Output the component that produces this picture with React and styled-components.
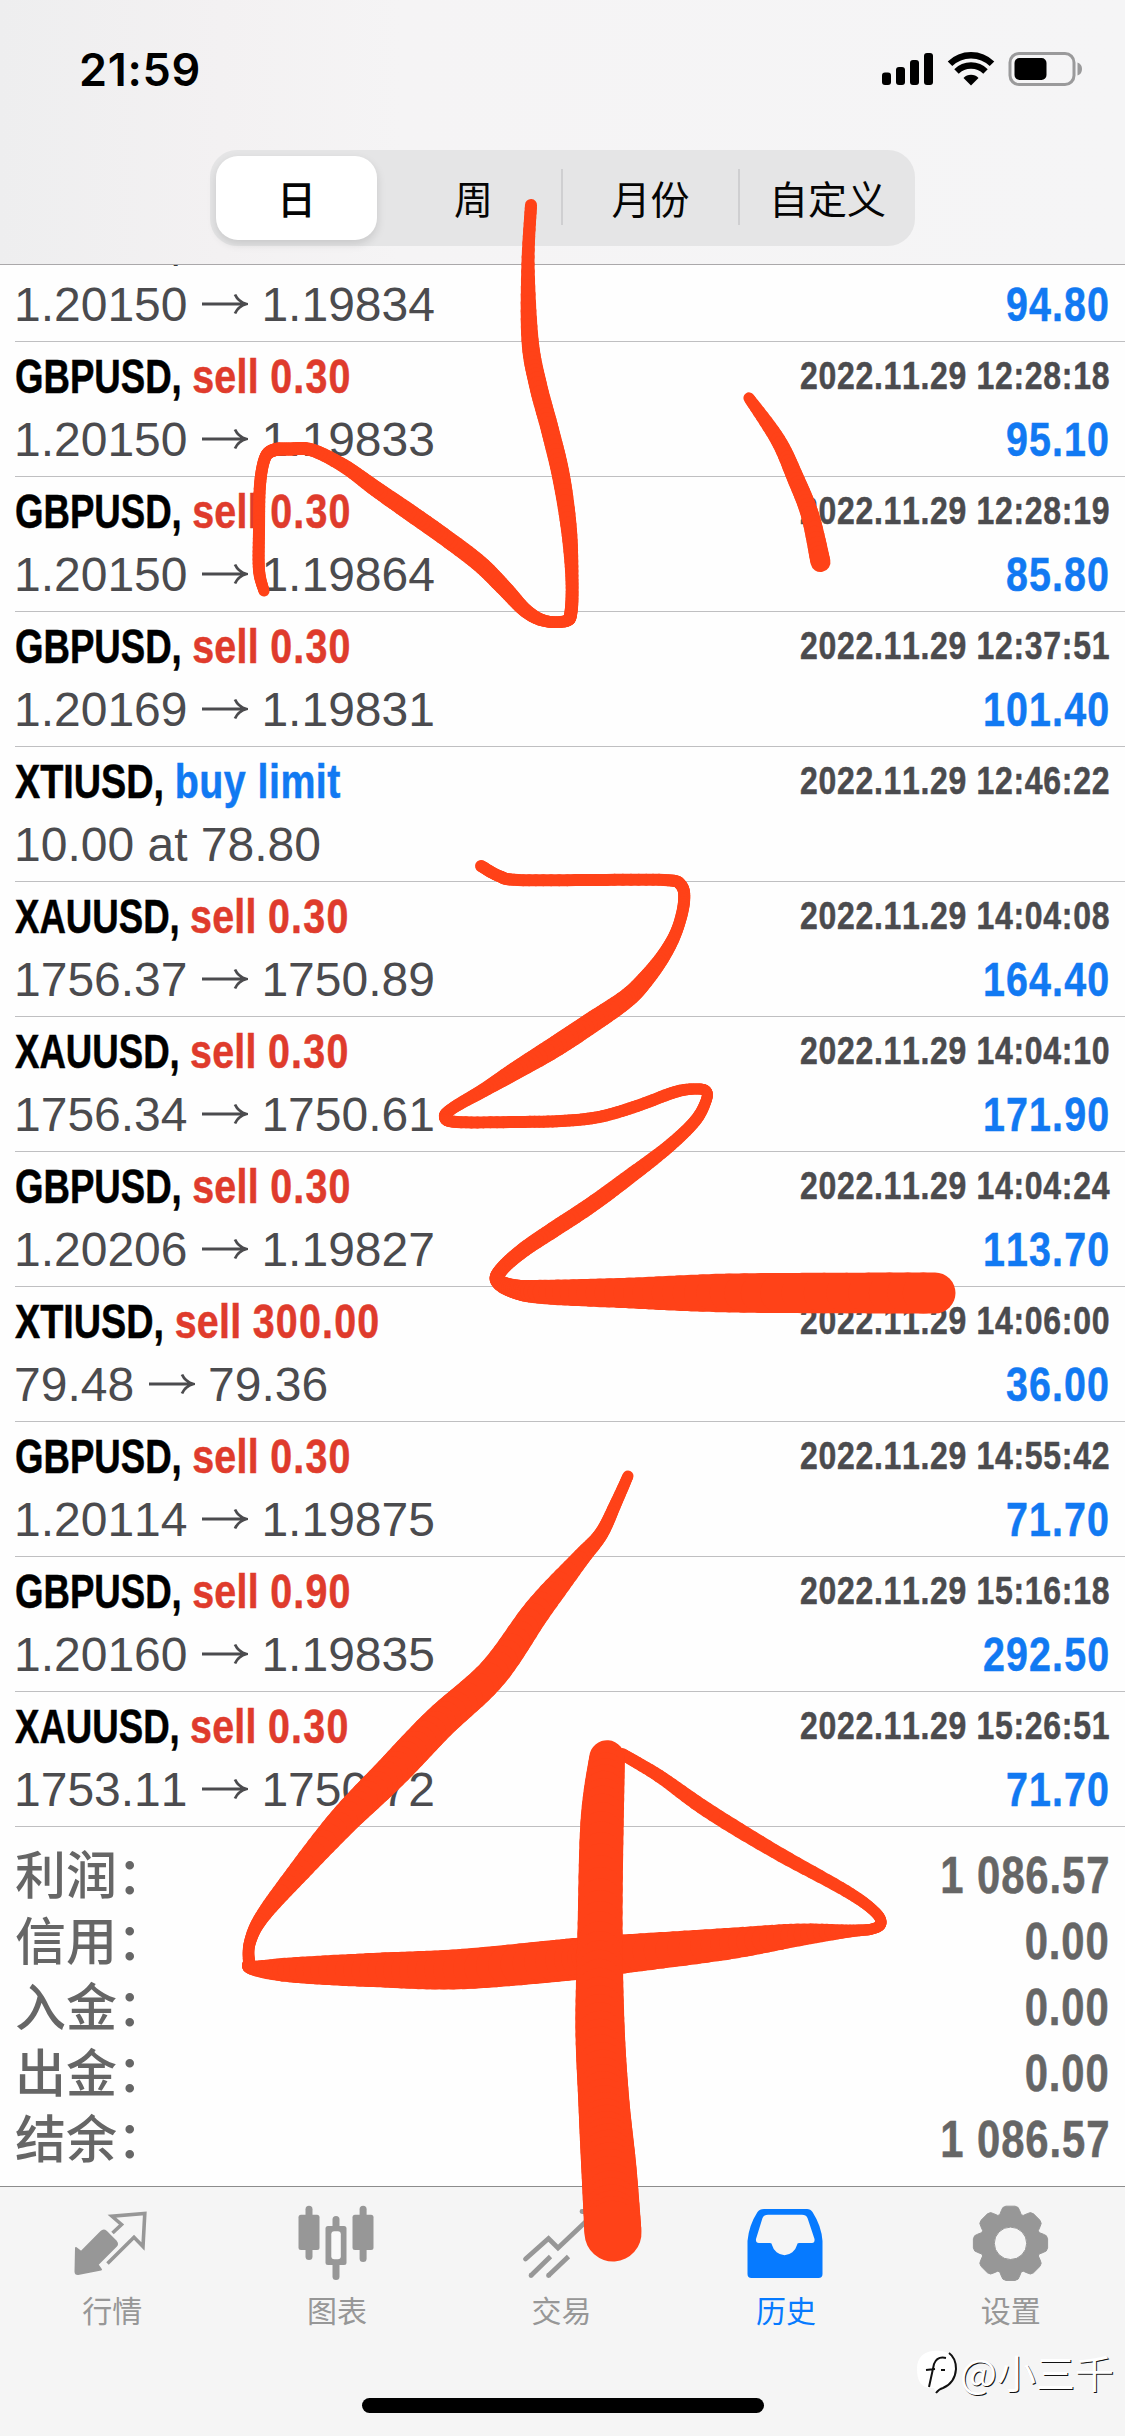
import React from "react";
import styled, { createGlobalStyle } from "styled-components";

const GlobalStyle = createGlobalStyle`
  body {
    margin: 0;
    background: #fff;
  }
  * {
    box-sizing: border-box;
  }
`;

const colors = {
  blue: "#1179f2",
  tabBlue: "#067aff",
  red: "#df3b2c",
  text: "#4b4b4e",
  total: "#666",
  gray: "#979797",
  brush: "#ff4218",
};

const Screen = styled.div`
  position: relative;
  width: 1125px;
  height: 2436px;
  display: flex;
  flex-direction: column;
  overflow: hidden;
  background: #fefefe;
  font-family: "Liberation Sans", "Noto Sans CJK SC", sans-serif;
  font-kerning: none;
`;

const Header = styled.header`
  height: 265px;
  flex: none;
  border-bottom: 1px solid #aaa8aa;
  background: linear-gradient(90deg, #eeeeef 0, #f3f1f2 220px, #f5f4f5 400px, #f5f5f6 100%);
`;

const StatusBar = styled.div`
  height: 150px;
  padding: 40px 42px 0 79px;
  display: flex;
  justify-content: space-between;
  align-items: flex-start;
`;

const Clock = styled.span`
  font-family: Inter, sans-serif;
  font-weight: 600;
  font-size: 45px;
  line-height: 59px;
  letter-spacing: 0.7px;
`;

const StatusIcons = styled.svg`
  width: 204px;
  height: 38px;
  margin-top: 10px;
`;

// 日 / 周 / 月份 / 自定义
const Segments = styled.div`
  width: 705px;
  height: 96px;
  margin-left: 210px;
  padding: 6px 0 6px 6px;
  border-radius: 27px;
  display: grid;
  grid-template-columns: 161px 9px 175px 2px 175px 2px 1fr;
  background: #e5e5e6;
`;

const Segment = styled.div`
  display: flex;
  align-items: center;
  justify-content: center;
  padding-bottom: 3px;
  border-radius: 22px;
  background: ${(p) => (p.$active ? "#fff" : "transparent")};
  box-shadow: ${(p) => (p.$active ? "0 4px 10px rgba(0, 0, 0, 0.13)" : "none")};
  font-family: "Noto Sans CJK SC", sans-serif;
  font-size: 39px;
  line-height: 56px;
  font-weight: ${(p) => (p.$active ? 500 : 400)};
  color: #050505;
`;

const Divider = styled.i`
  height: 56px;
  margin-top: 13px;
  background: ${(p) => (p.$hidden ? "transparent" : "#cfcfd1")};
`;

const List = styled.main`
  flex: none;
  height: 1562px;
  display: flex;
  flex-direction: column;
  justify-content: flex-end;
  overflow: hidden;
`;

const Row = styled.div`
  flex: none;
  height: 135px;
  margin-left: 15px;
  padding: 4px 15px 0 0;
  border-bottom: 1px solid #bfbfc1;
`;

const Line = styled.div`
  height: 63px;
  display: flex;
  justify-content: space-between;
  line-height: 62px;
  white-space: pre;
`;

// condensed bold
const Condensed = styled.span`
  display: inline-block;
  font-weight: bold;
  font-size: 48px;
  -webkit-text-stroke: 0.5px currentColor;
  transform: scaleX(0.82);
  transform-origin: ${(p) => (p.$right ? "right" : "left")} center;
`;

const Symbol = styled.span`
  display: inline-block;
  margin-right: ${(p) => (p.$wide ? "-8px" : "-16px")};
  color: #000;
  transform: scaleX(${(p) => (p.$wide ? 0.96 : 0.93)});
  transform-origin: left center;
`;

const Side = styled.span`
  color: ${(p) => (p.$buy ? colors.blue : colors.red)};
  letter-spacing: ${(p) => (p.$buy ? "0.6px" : "0.35px")};
`;

const Volume = styled.span`
  color: ${colors.red};
  letter-spacing: 1.5px;
`;

const Time = styled(Condensed)`
  font-size: 39px;
  line-height: 60px;
  letter-spacing: 0.84px;
  color: ${colors.text};
`;

const Amount = styled(Condensed)`
  letter-spacing: 1.4px;
  color: ${colors.blue};
`;

const Price = styled.span`
  margin-left: -1px;
  font-size: 48px;
  color: ${colors.text};

  svg {
    width: 46px;
    height: 24px;
    margin: 0 13.3px 0 14.6px;
    vertical-align: 5px;
  }
`;

const Totals = styled.section`
  flex: none;
  height: 359px;
  padding: 14px 15px 0;
`;

const TotalRow = styled.div`
  height: 66px;
  display: flex;
  justify-content: space-between;
  line-height: 62px;
  color: ${colors.total};
`;

const TotalLabel = styled.span`
  font-family: "Noto Sans CJK SC", sans-serif;
  font-size: 51px;
  font-weight: 500;
`;

const TotalValue = styled(Condensed)`
  font-size: 51px;
  line-height: 70px;
  letter-spacing: 1.1px;
`;

const TabBar = styled.nav`
  flex: none;
  height: 250px;
  border-top: 1px solid #8c8c8c;
  background: #f5f5f5;
`;

const Tabs = styled.div`
  display: flex;
  width: 1123px;
  padding-top: 15px;
`;

const Tab = styled.div`
  flex: 1;
  display: flex;
  flex-direction: column;
  align-items: center;
  color: ${(p) => (p.$active ? colors.tabBlue : colors.gray)};
  font-family: "Noto Sans CJK SC", sans-serif;
  font-size: 30px;
  line-height: 44px;

  svg {
    width: 90px;
    height: 80px;
    margin-bottom: 5px;
  }
`;

const HomeIndicator = styled.div`
  width: 402px;
  height: 15px;
  margin: 67px auto 0;
  border-radius: 8px;
  background: #000;
`;

const Brush = styled.svg`
  position: absolute;
  top: 0;
  left: 0;
  width: 1125px;
  height: 2436px;
  stroke: ${colors.brush};
  stroke-linecap: round;
`;

const Watermark = styled.div`
  position: absolute;
  right: 11px;
  bottom: 39px;
  display: flex;
  align-items: center;
  font-family: "Noto Sans CJK SC", sans-serif;
  font-size: 39px;
  line-height: 52px;
  color: #fff;
  text-shadow: 1px 1px 0 #111;

  svg {
    width: 46px;
    height: 48px;
    margin-right: 1px;
  }
`;

const orders = [
  ["GBPUSD", "sell", "0.30", "2022.11.29 12:28:18", "1.20150", "1.19834", "94.80"],
  ["GBPUSD", "sell", "0.30", "2022.11.29 12:28:18", "1.20150", "1.19833", "95.10"],
  ["GBPUSD", "sell", "0.30", "2022.11.29 12:28:19", "1.20150", "1.19864", "85.80"],
  ["GBPUSD", "sell", "0.30", "2022.11.29 12:37:51", "1.20169", "1.19831", "101.40"],
  ["XTIUSD", "buy limit", "", "2022.11.29 12:46:22", "10.00 at 78.80", "", ""],
  ["XAUUSD", "sell", "0.30", "2022.11.29 14:04:08", "1756.37", "1750.89", "164.40"],
  ["XAUUSD", "sell", "0.30", "2022.11.29 14:04:10", "1756.34", "1750.61", "171.90"],
  ["GBPUSD", "sell", "0.30", "2022.11.29 14:04:24", "1.20206", "1.19827", "113.70"],
  ["XTIUSD", "sell", "300.00", "2022.11.29 14:06:00", "79.48", "79.36", "36.00"],
  ["GBPUSD", "sell", "0.30", "2022.11.29 14:55:42", "1.20114", "1.19875", "71.70"],
  ["GBPUSD", "sell", "0.90", "2022.11.29 15:16:18", "1.20160", "1.19835", "292.50"],
  ["XAUUSD", "sell", "0.30", "2022.11.29 15:26:51", "1753.11", "1750.72", "71.70"],
];

const totals = [
  ["利润", "1 086.57"],
  ["信用", "0.00"],
  ["入金", "0.00"],
  ["出金", "0.00"],
  ["结余", "1 086.57"],
];

// brush strokes: x, y, width
const strokes = [
  [
    [531, 205, 12], [528, 264, 13], [530, 340, 17], [538, 385, 18], [550, 430, 18],
    [561, 476, 18], [569, 530, 16], [572, 580, 13], [571, 612, 13], [566, 621, 12],
    [545, 621, 12], [526, 611, 14], [505, 589, 16], [480, 564, 17], [446, 538, 17],
    [412, 514, 17], [376, 489, 16], [344, 466, 14], [312, 450, 13], [290, 449, 13],
    [274, 450, 13], [265, 458, 12], [260, 485, 12], [259, 530, 12], [259, 570, 12], [264, 591, 11],
  ],
  [[749, 398, 11], [778, 440, 15], [795, 477, 17], [810, 515, 18], [820.5, 562, 20]],
  [
    [481, 866, 12], [499, 876, 12], [518, 880, 12], [591, 880, 12], [664, 880, 12],
    [681, 885, 12], [684, 902, 12], [677, 930, 12], [664, 955, 14], [645, 980, 17],
    [626, 999, 19], [591, 1023, 21], [553, 1048, 21], [515, 1071, 18], [484, 1090, 14],
    [453, 1108, 12], [445, 1117, 12], [457, 1122, 12], [515, 1122, 12], [561, 1121, 12],
    [599, 1117, 12], [637, 1106, 12], [675, 1092, 12], [695, 1089, 11], [706, 1091, 11],
    [706, 1101, 11], [695, 1121, 12], [668, 1147, 13], [629, 1177, 15], [591, 1205, 16],
    [553, 1230, 16], [522, 1251, 15], [501, 1270, 14], [498, 1281, 15], [515, 1289, 19],
    [545, 1292, 24], [629, 1293, 30], [744, 1293, 39], [935, 1293, 41],
  ],
  [
    [628, 1476, 11], [616, 1503, 12], [601, 1534, 14], [579, 1560, 18], [537, 1611, 27],
    [493, 1673, 31], [439, 1723, 34], [391, 1773, 34], [343, 1821, 30], [296, 1875, 22],
    [262, 1917, 15], [250, 1942, 12], [249, 1961, 12], [253, 1968, 14], [296, 1970, 25],
    [377, 1970, 34], [463, 1969, 40], [575, 1959, 42], [623, 1954, 39], [726, 1944, 32],
    [798, 1935, 23], [850, 1931, 13], [872, 1929, 11], [881, 1923, 11], [874, 1911, 11],
    [846, 1891, 12], [774, 1851, 14], [707, 1810, 15], [659, 1776, 13], [622, 1754, 12],
  ],
  [
    [607, 1758, 35], [602, 1824, 43], [600, 1934, 45], [600, 2027, 49], [604, 2104, 51],
    [609, 2170, 55], [613, 2233, 57],
  ],
];

// Catmull-Rom between the control points
const smooth = (pts, steps = 10) => {
  const out = [];
  for (let i = 0; i < pts.length - 1; i++) {
    const [a, b, c, d] = [pts[i - 1] || pts[i], pts[i], pts[i + 1], pts[i + 2] || pts[i + 1]];
    for (let s = 0; s < steps; s++) {
      const t = s / steps;
      out.push(
        b.map(
          (v, k) =>
            0.5 *
            (2 * v +
              (c[k] - a[k]) * t +
              (2 * a[k] - 5 * v + 4 * c[k] - d[k]) * t * t +
              (3 * v - a[k] - 3 * c[k] + d[k]) * t * t * t)
        )
      );
    }
  }
  out.push(pts[pts.length - 1]);
  return out;
};

const BrushStroke = ({ points }) => {
  const pts = smooth(points);
  return (
    <g>
      {pts.slice(1).map((p, i) => (
        <line key={i} x1={pts[i][0]} y1={pts[i][1]} x2={p[0]} y2={p[1]} strokeWidth={p[2]} />
      ))}
    </g>
  );
};

const Arrow = () => (
  <svg viewBox="0 0 46 24" fill="none" stroke="currentColor" strokeWidth="2.8">
    <path d="M0 12H44M33 2.5C35 7 39 10.500 44.500 12C39 13.500 35 17 33 21.500" />
  </svg>
);

const OrderRow = ({ order }) => {
  const [symbol, side, volume, time, open, close, profit] = order;
  return (
    <Row>
      <Line>
        <Condensed>
          <Symbol $wide={symbol === "XTIUSD"}>{symbol}, </Symbol>
          <Side $buy={side !== "sell"}>{side} </Side>
          <Volume>{volume}</Volume>
        </Condensed>
        <Time $right>{time}</Time>
      </Line>
      <Line>
        <Price>
          {open}
          {close && <Arrow />}
          {close}
        </Price>
        <Amount $right>{profit}</Amount>
      </Line>
    </Row>
  );
};

const QuotesIcon = () => (
  <svg viewBox="0 0 90 80">
    <path
      d="M9 46L14.200 50L34 30Q36.500 27.500 39 29.500L49 39.500Q51 42 49 44L30.500 62.500L34 67.500L11 72Q8.500 72 8.500 69.500Z"
      fill="currentColor"
      stroke="currentColor"
      strokeWidth="2"
      strokeLinejoin="round"
    />
    <path
      d="M45.500 31L54.500 22.500L45 14.300L77.800 11.500L76 44.500L67 35.300L40.500 61.500"
      fill="none"
      stroke="currentColor"
      strokeWidth="3.600"
    />
  </svg>
);

const ChartIcon = () => (
  <svg viewBox="0 0 90 80" fill="currentColor">
    <rect x="6.500" y="12.700" width="21" height="35.300" rx="2.500" />
    <rect x="13.500" y="3.700" width="7" height="54.300" rx="3.500" />
    <rect x="60.500" y="12.700" width="21" height="35.300" rx="2.500" />
    <rect x="67.600" y="3.700" width="7" height="56.300" rx="3.500" />
    <rect x="40.500" y="14" width="7" height="64" rx="3.500" />
    <rect x="33.500" y="24" width="21" height="39" rx="2.500" />
    <rect x="39.300" y="29.300" width="9.500" height="28" rx="3" fill="#f9f9f9" />
  </svg>
);

const TradeIcon = () => (
  <svg viewBox="0 0 90 80" fill="none" stroke="currentColor" strokeWidth="4.800">
    <path d="M9.500 57L32.500 36.500L42 46L80 10M66 9.500H80V24" strokeLinecap="round" />
    <path d="M15 73.500L34.500 54.500M32.500 73.500L52.500 54.500" />
    <path d="M15 73.500h.1M32.500 73.500h.1" strokeLinecap="round" />
  </svg>
);

const HistoryIcon = () => (
  <svg viewBox="0 0 90 80" fill="currentColor" fillRule="evenodd">
    <path d="M23 7H66Q69.500 7 71.500 10Q80.500 24 81.500 39V72Q81.500 76 77.500 76H10.500Q6.500 76 6.500 72V39Q8 23 16.500 10Q18.500 7 23 7ZM27 12.700Q23 12.700 21.500 16L15 37Q14.500 41 18 41H29Q31 41 31 43A13 14 0 0 0 56 43Q56 41 58 41H71Q74 41 73.500 37L66.500 16Q65 12.700 61 12.700Z" />
  </svg>
);

const gearPath = () => {
  const shape = [[-20.5, 30.6], [-15.6, 34], [-12, 36.6], [-7, 37.4], [7, 37.4], [12, 36.6], [15.6, 34], [20.5, 30.6]];
  const pts = [];
  for (let k = 0; k < 8; k++) {
    shape.forEach(([deg, r]) => {
      const a = ((deg + k * 45) * Math.PI) / 180;
      pts.push(`${(44.5 + r * Math.sin(a)).toFixed(2)} ${(41.3 - r * Math.cos(a)).toFixed(2)}`);
    });
  }
  return `M${pts.join("L")}ZM28.300 41.300a16.200 16.200 0 1 0 32.400 0a16.200 16.200 0 1 0 -32.400 0Z`;
};

const SettingsIcon = () => (
  <svg viewBox="0 0 90 80">
    <path d={gearPath()} fill="currentColor" fillRule="evenodd" stroke="currentColor" strokeWidth="1" strokeLinejoin="round" />
  </svg>
);

const tabs = [
  ["行情", QuotesIcon],
  ["图表", ChartIcon],
  ["交易", TradeIcon],
  ["历史", HistoryIcon],
  ["设置", SettingsIcon],
];

const App = () => (
  <>
    <GlobalStyle />
    <Screen>
      <Header>
        <StatusBar>
          <Clock>21:59</Clock>
          <StatusIcons viewBox="0 0 204 38">
            <rect x="3" y="22.500" width="9" height="12.500" rx="3" />
            <rect x="17" y="17" width="9" height="18" rx="3" />
            <rect x="31" y="10" width="9" height="25" rx="3" />
            <rect x="45" y="3" width="9" height="32" rx="3" />
            <path d="M92 35.500L84.500 28A10.500 10.500 0 0 1 99.500 28Z" />
            <path d="M77.500 21.500A20.500 20.500 0 0 1 106.500 21.500" fill="none" stroke="#000" strokeWidth="6.300" />
            <path d="M71 13.800A30 30 0 0 1 113 13.800" fill="none" stroke="#000" strokeWidth="6.500" />
            <rect x="131" y="3.500" width="64" height="31" rx="9" fill="none" stroke="#9a9a9b" strokeWidth="3" />
            <rect x="135.500" y="8" width="32" height="22" rx="5" />
            <path d="M198.500 12.500Q203 14 203 19T198.500 25.500Z" fill="#9a9a9b" />
          </StatusIcons>
        </StatusBar>
        <Segments>
          <Segment $active>日</Segment>
          <Divider $hidden />
          <Segment>周</Segment>
          <Divider />
          <Segment>月份</Segment>
          <Divider />
          <Segment>自定义</Segment>
        </Segments>
      </Header>

      <List>
        {orders.map((order, i) => (
          <OrderRow key={i} order={order} />
        ))}
      </List>

      <Totals>
        {totals.map(([label, value]) => (
          <TotalRow key={label}>
            <TotalLabel>{label}：</TotalLabel>
            <TotalValue $right>{value}</TotalValue>
          </TotalRow>
        ))}
      </Totals>

      <TabBar>
        <Tabs>
          {tabs.map(([label, Icon]) => (
            <Tab key={label} $active={label === "历史"}>
              <Icon />
              {label}
            </Tab>
          ))}
        </Tabs>
        <HomeIndicator />
      </TabBar>

      <Brush viewBox="0 0 1125 2436">
        {strokes.map((points, i) => (
          <BrushStroke key={i} points={points} />
        ))}
      </Brush>

      <Watermark>
        <svg viewBox="0 0 46 48">
          <path d="M20 4C36 2 43 10 43 22C43 34 36 41 27 42L23 46L21 41C8 42 4 34 4 22C4 11 10 5 20 4Z" fill="#fff" />
          <path d="M36 6Q43 11 43 22Q42 36 30 41Q26 42 23 46M33 11Q24 9 21 17L16 40M13 23L22 22M28 23H32" fill="none" stroke="#111" strokeWidth="2" />
        </svg>
        @小三千
      </Watermark>
    </Screen>
  </>
);

export default App;
